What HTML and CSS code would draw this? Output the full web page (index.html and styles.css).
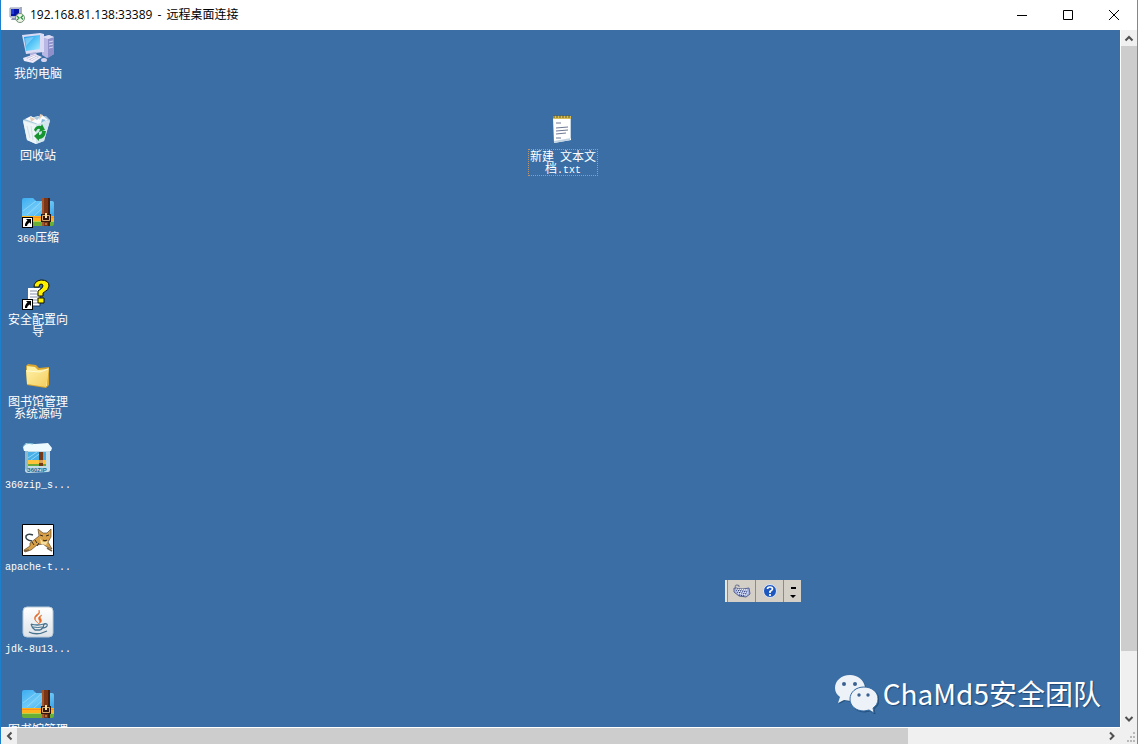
FILE: index.html
```html
<!DOCTYPE html>
<html lang="zh-CN">
<head>
<meta charset="utf-8">
<title>192.168.81.138:33389 - 远程桌面连接</title>
<link rel="stylesheet" href="styles.css">
</head>
<body>
<svg class="defs" aria-hidden="true">
  <defs>
    <linearGradient id="screen" x1="0" y1="0" x2="1" y2="1"><stop offset="0" stop-color="#1e8ee0"/><stop offset=".5" stop-color="#55c4f6"/><stop offset="1" stop-color="#a5edff"/></linearGradient>
    <linearGradient id="folderBlue" x1="0" y1="0" x2="1" y2="1"><stop offset="0" stop-color="#3cacf0"/><stop offset=".5" stop-color="#6fcaf8"/><stop offset="1" stop-color="#35a2e6"/></linearGradient>
    <linearGradient id="folderGold" x1="0" y1="0" x2="1" y2="1"><stop offset="0" stop-color="#fff3a8"/><stop offset="1" stop-color="#f3cb5c"/></linearGradient>
    <linearGradient id="tile" x1="0" y1="0" x2="0" y2="1"><stop offset="0" stop-color="#ffffff"/><stop offset="1" stop-color="#dde3e8"/></linearGradient>
    <symbol id="archive" viewBox="0 0 32 32">
      <path d="M0 4q0-2 2-2h9l3 3h16q2 0 2 2v14H0z" fill="url(#folderBlue)"/>
      <path d="M1 15 14 5M5 19 19 6M12 20 26 7" stroke="#a2defb" stroke-width="1" opacity=".7"/>
      <path d="M0 20h32v5H0z" fill="#ffb21c"/><path d="M0 21h32v1H0z" fill="#ff8d1f"/>
      <path d="M0 25h32v3q0 2-2 2H2q-2 0-2-2z" fill="#67af37"/><path d="M0 25h32v1H0z" fill="#b5d34d"/>
      <path d="M20 2h8v28h-8z" fill="#7a3516"/><path d="M20 2h2v28h-2z" fill="#a2552c"/><path d="M26 2h2v28h-2z" fill="#4b1c0c"/>
      <path d="M19 18h10v8H19z" fill="#2f1710"/><path d="M20.500 19.500h7v5h-7z" fill="none" stroke="#d8a66a"/><path d="M23 17h2v5h-2z" fill="#ffe0a0"/>
      <path d="M24 27v2" stroke="#f0b060"/>
    </symbol>
    <symbol id="shortcut" viewBox="0 0 11 11">
      <path d="M0 0h11v11H0z" fill="#000"/><path d="M1 1h9v9H1z" fill="#fff"/>
      <path d="M4 2h5v5L7.500 5.500Q5 7 5 9H3Q2.500 6 5.500 3.500z" fill="#000"/>
    </symbol>
  </defs>
</svg>

<div class="window">
  <header class="titlebar">
    <svg class="app-icon" viewBox="0 0 16 16" aria-hidden="true">
      <path d="M1 1h10v9H1z" fill="#d8dce8" stroke="#8e98b4"/><path d="M2 2h8v7H2z" fill="#0614a8"/><path d="M2 2h3v5H2z" fill="#2439dd"/>
      <path d="M11 0h2v9h-2z" fill="#a1abc2"/><path d="M3 11h5v2H2z" fill="#8e98b4"/>
      <circle cx="11" cy="11" r="4.500" fill="#eef5e8" stroke="#78927a"/>
      <path d="m8 9 2 2-2 2M14 8.500l-2 2 2 2" fill="none" stroke="#26933a" stroke-width="1.200"/>
    </svg>
    <h1 class="title">192.168.81.138:33389 <span class="dash">-</span> 远程桌面连接</h1>
    <div class="window-controls">
      <button type="button" aria-label="最小化"><svg viewBox="0 0 12 12"><path d="M1 6.500h10"/></svg></button>
      <button type="button" aria-label="最大化"><svg viewBox="0 0 12 12"><path d="M1.500 1.500h9v9h-9z"/></svg></button>
      <button type="button" aria-label="关闭"><svg viewBox="0 0 12 12"><path d="m1 1 10 10M11 1 1 11"/></svg></button>
    </div>
  </header>

  <main class="desktop">
    <div class="icon-column">
      <button type="button" class="item">
        <svg class="icon" viewBox="0 0 32 32" aria-hidden="true">
          <path d="m20 5 7-2 5 2v17l-7 4-5-3z" fill="#b9b8e4"/><path d="m26 7 6-2v17l-6 4z" fill="#8f90ca"/><path d="m20 5 7-2 5 2-6 2z" fill="#dddef5"/>
          <path d="m27 10 4-1m-4 4 4-1m-4 4 4-1" stroke="#d9d7f5"/>
          <path d="m0 3 18-2 4 1v18L4 22z" fill="#d9dcf4"/><path d="m2 5 16-2v14L4 19z" fill="url(#screen)"/><path d="m3 6 9-1-8 9z" fill="#a4e6ff" opacity=".5"/>
          <path d="m8 21 6-1 1 4-7 2z" fill="#b3b1dc"/>
          <path d="m1 26 12-4 7 3-9 6-9-2z" fill="#eeeaf8"/><path d="m4 26 8-3 5 2-7 4z" fill="#c8c5e4"/><path d="m6 27 7-3m-4 4 6-3" stroke="#fff"/>
          <ellipse cx="22" cy="28" rx="3" ry="2" fill="#d5d2ee"/>
        </svg>
        <span class="label">我的电脑</span>
      </button>
      <button type="button" class="item">
        <svg class="icon" viewBox="0 0 32 32" aria-hidden="true">
          <path d="m1 6 4 20 9 4 8-3 6-21-12-4z" fill="#dceaf0"/><path d="m1 6 13 4 14-4-4-4-9 1z" fill="#a8c8dc"/>
          <path d="m3 5 6-3 6 4 5-5 6 5-10 4z" fill="#f9fbff"/><path d="m8 3 5 2-4 3zM18 0l3 1-4 5z" fill="#e6cbb2"/><path d="m20 5 4 1-5 3z" fill="#85b8d8"/>
          <path d="m1 7 13 4v19l-9-4z" fill="#edf5f7"/><path d="m14 11 14-4-6 20-8 3z" fill="#d3e5ee"/>
          <path d="m5 12 3 12M9 12l2 14" stroke="#d2e0e8"/>
          <path d="M12 16q2-5 7-4l1-2 3 6-6 2 1-3q-3-1-4 3zM24 17q-1 8-7 8v2l-5-5 5-4v3q3 0 3-4z" fill="#16942d"/>
        </svg>
        <span class="label">回收站</span>
      </button>
      <button type="button" class="item">
        <svg class="icon" viewBox="0 0 32 32" aria-hidden="true"><use href="#archive"/><use href="#shortcut" x="0" y="21" width="11" height="11"/></svg>
        <span class="label"><span class="latin">360</span>压缩</span>
      </button>
      <button type="button" class="item">
        <svg class="icon" viewBox="0 0 32 32" aria-hidden="true">
          <path d="M6 10h12v18H6z" fill="#fff"/><path d="M18 12v16H9" fill="none" stroke="#18355c"/><path d="M8 13h7M8 16h8M8 19h8M8 22h8M8 25h8" stroke="#8790aa"/>
          <path d="M12 9q0-6 7-7 8 0 8 6 0 4-6 7v3h-5v-5q5-3 5-5t-2-2q-2 0-2 3zM16 20h6v5h-6z" fill="#fff200" stroke="#101000"/>
          <use href="#shortcut" x="0" y="21" width="11" height="11"/>
        </svg>
        <span class="label">安全配置向导</span>
      </button>
      <button type="button" class="item">
        <svg class="icon" viewBox="0 0 32 32" aria-hidden="true">
          <path d="m4 6 2-2 8 1 3 3 10-1v18l-3 3-19-3z" fill="#d9a52d"/><path d="m5 6 8 1 3 3 10-1-1 17-20-3z" fill="#fff0a0"/>
          <path d="m4 10 14 1 9-3-3 19-19-3z" fill="url(#folderGold)"/><path d="m5 11 13 1 8-3" fill="none" stroke="#fffbd2"/>
        </svg>
        <span class="label">图书馆管理系统源码</span>
      </button>
      <button type="button" class="item">
        <svg class="icon" viewBox="0 0 32 32" aria-hidden="true">
          <path d="M3 6h25v22q0 2-2 2l-20 1q-3 0-3-3z" fill="#c4dce7"/><path d="M3 7h3v23l-3-3z" fill="#8ebacb"/>
          <path d="m1 5 3-4 9 1 13-1 4 5-1 3H2z" fill="#edfaff"/><path d="M1 5q2-5 10-3" fill="none" stroke="#74bad5"/>
          <path d="M6 10h18v14H6z" fill="#48afe7"/><path d="m6 16 9-6M9 18l11-8" stroke="#8dd7f8"/>
          <path d="M6 18h18v4H6z" fill="#ffc33b"/><path d="M6 22h18v2H6z" fill="#6baa3a"/><path d="M17 10h4v14h-4z" fill="#743817"/><path d="M17 18h4v3h-4z" fill="#d69f5c"/>
          <text class="icon-caption" x="15" y="30">360ZIP</text>
        </svg>
        <span class="label label-latin">360zip_s...</span>
      </button>
      <button type="button" class="item">
        <svg class="icon" viewBox="0 0 32 32" aria-hidden="true">
          <path d="M.5.5h31v31H.5z" fill="#fff" stroke="#000"/>
          <path d="M10 17Q3 16 4 12q2-3 7-1" fill="none" stroke="#354348" stroke-width="1.500"/>
          <path d="m8 19 9-7-1-7 5 4h4l4-4v8l-3 5 4 7-5-2-4-3-6 1-6 5-6 2-1-2 6-4z" fill="#d8a047" stroke="#49351e" stroke-width=".6"/>
          <path d="m18 14 3 4 5-1-2 4-5-1z" fill="#f5dfa0"/><path d="m18 11 3 1M27 11l-3 1M21 16l2 1 2-1M13 16l2 3M10 18l2 3M17 19l-2 3" stroke="#3a2b20"/>
          <path d="m2 27 5-1M25 24l5 3" stroke="#7a6242" stroke-width="1.500"/>
        </svg>
        <span class="label label-latin">apache-t...</span>
      </button>
      <button type="button" class="item">
        <svg class="icon" viewBox="0 0 32 32" aria-hidden="true">
          <rect x="1" y="1" width="30" height="30" rx="4" fill="url(#tile)" stroke="#b8cad8"/>
          <path d="M17 4q2 3-2 6t1 7q-6-4-2-8 4-2 3-5M20 9q-5 2-3 5 2 2-1 4 5-2 3-5-2-2 1-4" fill="#e36a27" stroke="#e36a27" stroke-width=".5"/>
          <path d="M9 18q6 2 13 0-1 5-4 6h-5q-3-2-4-6M22 18q4-1 3 2-1 2-5 2M7 26q8 4 18-1" fill="none" stroke="#47738f" stroke-width="1.300"/><path d="M11 21q5 1 9 0" stroke="#47738f" fill="none"/>
        </svg>
        <span class="label label-latin">jdk-8u13...</span>
      </button>
      <button type="button" class="item">
        <svg class="icon" viewBox="0 0 32 32" aria-hidden="true"><use href="#archive"/></svg>
        <span class="label">图书馆管理</span>
      </button>
    </div>

    <button type="button" class="item item-selected">
      <svg class="icon" viewBox="0 0 32 32" aria-hidden="true">
        <path d="m6 4 18-1v23L7 29z" fill="#fff"/><path d="m7 29 17-3v-2L7 27zM23 4h1v22h-1z" fill="#c2d4e3"/>
        <path d="M6 2h18v3H6z" fill="#d6bd55"/><path d="M7 1v3m3-3v3m3-3v3m3-3v3m3-3v3m3-3v3" stroke="#675b1c"/>
        <path d="M9 9h5M9 14l12-1M9 17l12-1M9 20l10-1M9 24h5" stroke="#6d7894"/>
      </svg>
      <span class="label">新建<span class="latin">&nbsp;</span>文本文档<span class="latin">.txt</span></span>
    </button>

    <div class="language-bar" role="toolbar" aria-label="语言栏">
      <button type="button" class="bar-button" aria-label="键盘">
        <svg viewBox="0 0 18 16"><path d="M3 5q-2-3 1-3t2 2" fill="none" stroke="#656c88"/><path d="m1 5 9 1 6-1 1 6-4 3-7-1-5-4z" fill="#a8b4e4" stroke="#59638d"/><path d="m3 7 11 2M4 9l10 2M6 12l6 1" stroke="#26345f" stroke-dasharray="1 1"/><path d="m3 6 12 1M4 8l11 2M5 10l9 2" stroke="#f3f6ff" stroke-dasharray="1 1"/></svg>
      </button>
      <button type="button" class="bar-button" aria-label="帮助">
        <svg viewBox="0 0 18 16"><circle cx="9" cy="8" r="6.500" fill="#1d56be" stroke="#dce7fc"/><path d="M6.500 6q0-2 2.500-2t2.500 2q0 1-2.500 2.500V10M9 11v2" fill="none" stroke="#fff" stroke-width="1.700"/></svg>
      </button>
      <button type="button" class="bar-button bar-options" aria-label="选项">
        <svg viewBox="0 0 16 18"><path d="M6 5h5v2H6zM5 13h6l-3 3z" fill="#000"/></svg>
      </button>
    </div>

    <div class="watermark">
      <svg viewBox="0 0 44 40" aria-hidden="true">
        <path d="M16 2C7 2 1 8 1 15c0 4 2 7 5 9l-2 6 6-3 7 1C16 19 21 14 31 14 30 7 24 2 16 2z" fill="#edf2f9"/>
        <path d="M30 14c-8 0-14 5-14 12s6 12 14 12l5-1 5 3-1-5c3-2 5-5 5-9 0-7-6-12-14-12z" fill="#edf2f9" stroke="#3a6ea5"/>
        <g fill="#3a6290"><circle cx="10" cy="11" r="2"/><circle cx="21" cy="11" r="2"/><circle cx="25" cy="22" r="1.700"/><circle cx="34" cy="22" r="1.700"/></g>
      </svg>
      <span>ChaMd5安全团队</span>
    </div>
  </main>

  <div class="scrollbar scrollbar-v">
    <button type="button" aria-label="向上滚动"><svg viewBox="0 0 16 16"><path d="m4.500 10.500 3.500-3.500 3.500 3.500"/></svg></button>
    <div class="track"><div class="thumb"></div></div>
    <button type="button" aria-label="向下滚动"><svg viewBox="0 0 16 16"><path d="m4.500 6 3.500 3.500 3.500-3.500"/></svg></button>
  </div>
  <div class="scrollbar scrollbar-h">
    <button type="button" aria-label="向左滚动"><svg viewBox="0 0 16 16"><path d="m10.500 4.500-3.500 3.500 3.500 3.500"/></svg></button>
    <div class="track"><div class="thumb"></div></div>
    <button type="button" aria-label="向右滚动"><svg viewBox="0 0 16 16"><path d="m6 4.500 3.500 3.500-3.500 3.500"/></svg></button>
  </div>
  <div class="grip"><svg viewBox="0 0 16 16" aria-hidden="true"><path d="M12 4h2v2h-2zM9 8h2v2H9zM12 8h2v2h-2zM6 12h2v2H6zM9 12h2v2H9zM12 12h2v2h-2z" fill="#b9b9b9"/></svg></div>
</div>
</body>
</html>
```

FILE: styles.css
```css
* { box-sizing: border-box; }

body {
  margin: 0;
  font-family: "Open Sans", "Noto Sans CJK SC", sans-serif;
  font-size: 12px;
  color: #000;
}

button {
  margin: 0;
  padding: 0;
  border: 0;
  background: none;
  color: inherit;
  font: inherit;
}

svg { display: block; }

.defs {
  position: absolute;
  width: 0;
  height: 0;
}

.window {
  display: grid;
  grid-template: 30px minmax(0, 1fr) 17px / minmax(0, 1fr) 17px;
  height: 100vh;
  border-left: 1px solid #1c80cc;
  border-right: 1px solid #3d9adb;
  background: #fff;
}

.titlebar {
  grid-column: 1 / -1;
  display: flex;
  align-items: center;
  padding-left: 8px;
}

.app-icon {
  width: 16px;
  height: 16px;
  margin-right: 5px;
}

.title {
  flex: 1;
  margin: 0;
  font-size: 12px;
  font-weight: 400;
  line-height: 16px;
}

.dash { padding: 0 2px; }

.window-controls {
  display: flex;
  align-self: stretch;
}

.window-controls button {
  display: flex;
  align-items: center;
  justify-content: center;
  width: 46px;
}

.window-controls svg {
  width: 12px;
  height: 12px;
  fill: none;
  stroke: #000;
}

.desktop {
  position: relative;
  overflow: hidden;
  background: #3a6ea5;
  color: #fff;
}

.icon-column {
  display: flex;
  flex-direction: column;
  width: 74px;
  padding-top: 2px;
}

.item {
  display: flex;
  flex: none;
  flex-direction: column;
  align-items: center;
  gap: 3px;
  height: 82px;
}

.icon {
  flex: none;
  width: 32px;
  height: 32px;
}

.icon-caption {
  fill: #22628a;
  font: 700 6px "Liberation Sans", sans-serif;
  text-anchor: middle;
}

.label {
  max-width: 70px;
  padding: 0 4px;
  font-family: "Noto Sans CJK SC", sans-serif;
  font-size: 12px;
  line-height: 12px;
  text-align: center;
}

.latin,
.label-latin {
  font-family: "Liberation Mono", monospace;
  font-size: 10px;
}

.latin { line-height: 6px; }

.label-latin {
  padding: 0;
  line-height: 18px;
}

.item-selected {
  position: absolute;
  left: 527px;
  top: 84px;
  width: 70px;
}

.item-selected .label {
  width: 70px;
  padding: 0 0 1px;
  border: 1px dotted #c09468;
}

.language-bar {
  position: absolute;
  left: 724px;
  top: 550px;
  display: flex;
  height: 22px;
  border-left: 2px solid #e8e5df;
  background: #d4d0c8;
}

.bar-button {
  display: flex;
  align-items: center;
  justify-content: center;
  width: 28px;
  border-left: 1px solid #8d8b86;
}

.bar-button svg {
  width: 18px;
  height: 16px;
}

.bar-options { width: 18px; }

.bar-options svg {
  width: 16px;
  height: 18px;
}

.watermark {
  position: absolute;
  right: 19px;
  bottom: 14px;
  display: flex;
  align-items: center;
  gap: 5px;
  font-family: "Noto Sans CJK SC", sans-serif;
  font-size: 28px;
  line-height: 40px;
  white-space: nowrap;
  text-shadow: 1px 1px 1px #1f4876;
}

.watermark svg {
  width: 44px;
  height: 40px;
  filter: drop-shadow(1px 1px 0 #24517f);
}

.scrollbar {
  display: flex;
  background: #f0f0f0;
}

.scrollbar-v {
  flex-direction: column;
  border-left: 1px solid #fff;
}

.scrollbar-h { border-top: 1px solid #fff; }

.scrollbar button {
  display: flex;
  flex: none;
  align-items: center;
  justify-content: center;
  width: 16px;
  height: 16px;
}

.scrollbar svg {
  width: 16px;
  height: 16px;
  fill: none;
  stroke: #505050;
  stroke-width: 2;
}

.track { flex: 1; }

.thumb { background: #cdcdcd; }

.scrollbar-v .thumb { height: 91%; }

.scrollbar-h .thumb {
  width: 82%;
  height: 100%;
}

.grip {
  display: flex;
  align-items: flex-end;
  justify-content: flex-end;
  background: #f0f0f0;
}

.grip svg {
  width: 16px;
  height: 16px;
}
```
